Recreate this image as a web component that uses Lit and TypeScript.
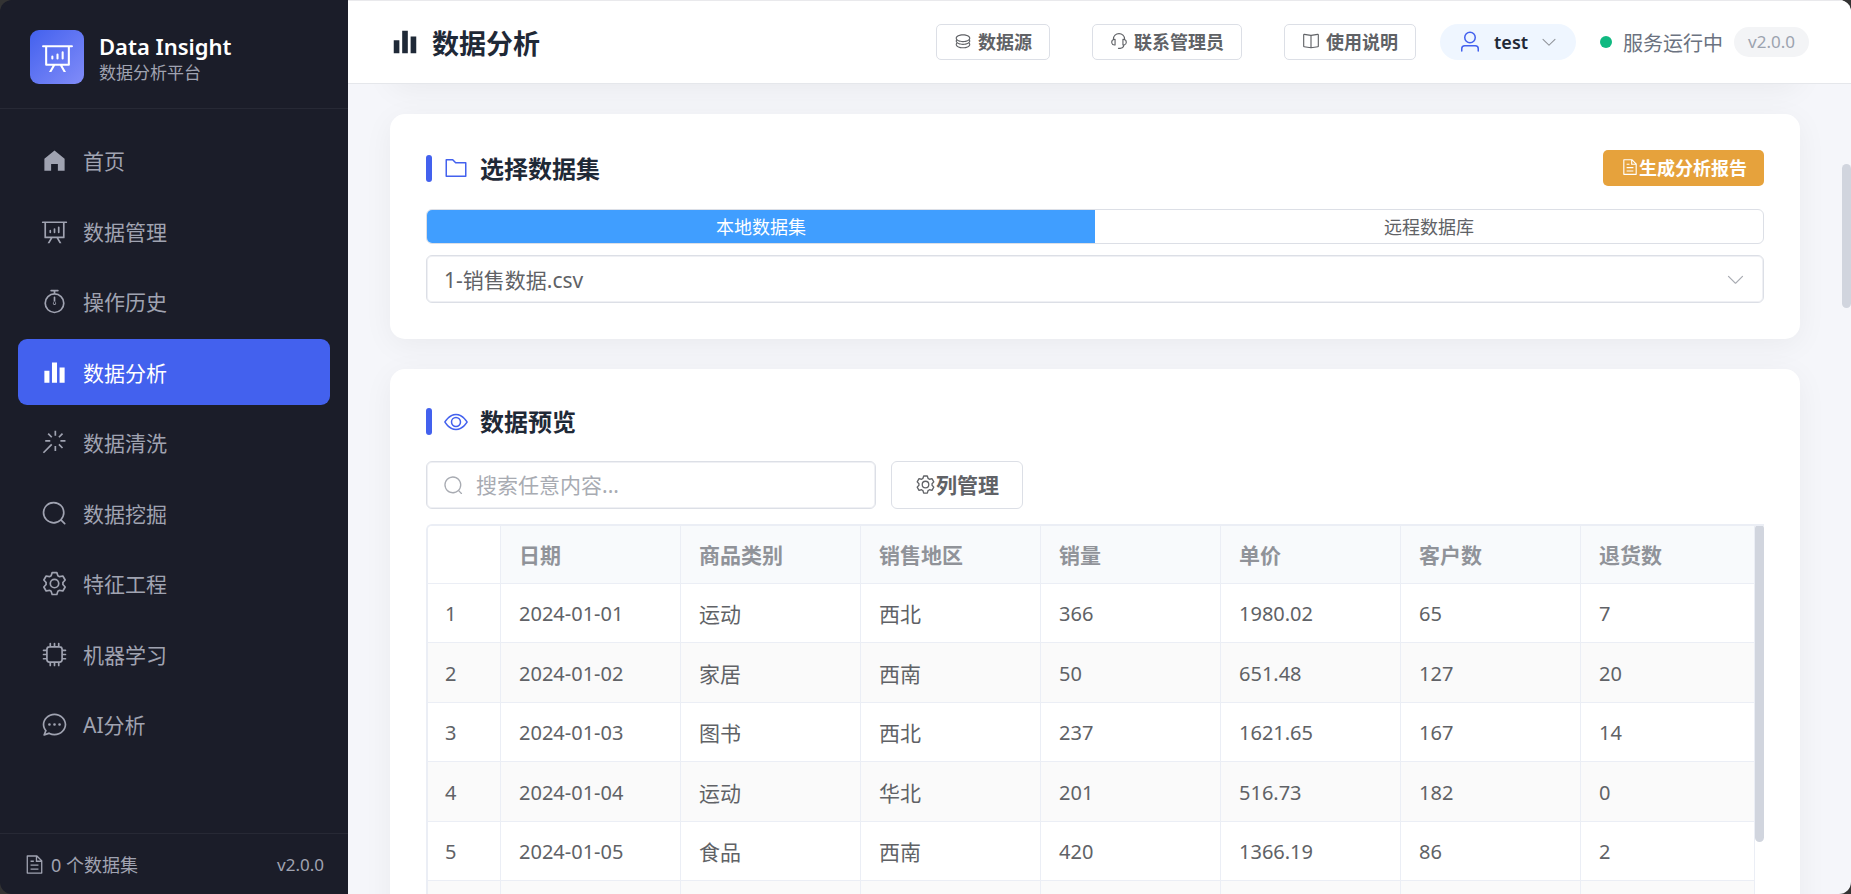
import { LitElement, html, css, svg } from "lit";
import { customElement, property } from "lit/decorators.js";
import { classMap } from "lit/directives/class-map.js";

const ICONS: Record<string, string> = {
  home: "M512 128 128 447.936V896h255.936V640H640v256h255.936V447.936z",
  board:
    "m665.216 768 110.848 192h-73.856L591.36 768H433.024L322.176 960H248.32l110.848-192H160a32 32 0 0 1-32-32V192H64a32 32 0 0 1 0-64h896a32 32 0 1 1 0 64h-64v544a32 32 0 0 1-32 32zM832 192H192v512h640zM352 448a32 32 0 0 1 32 32v64a32 32 0 0 1-64 0v-64a32 32 0 0 1 32-32m160-64a32 32 0 0 1 32 32v128a32 32 0 0 1-64 0V416a32 32 0 0 1 32-32m160-64a32 32 0 0 1 32 32v192a32 32 0 1 1-64 0V352a32 32 0 0 1 32-32",
  timer:
    "M512 896a320 320 0 1 0 0-640 320 320 0 0 0 0 640m0 64a384 384 0 1 1 0-768 384 384 0 0 1 0 768M512 320a32 32 0 0 1 32 32l-.512 224a32 32 0 1 1-64 0L480 352a32 32 0 0 1 32-32M448 576a64 64 0 1 0 128 0 64 64 0 1 0-128 0m96-448v128h-64V128h-96a32 32 0 0 1 0-64h256a32 32 0 1 1 0 64z",
  histogram: "M416 896V128h192v768zm-288 0V448h192v448zm576 0V320h192v576z",
  magic:
    "M512 64h64v192h-64zm0 576h64v192h-64zM160 480v-64h192v64zm576 0v-64h192v64zM249.856 199.04l45.248-45.184L430.848 289.6 385.6 334.848 249.856 199.104zM657.152 606.4l45.248-45.248 135.744 135.744-45.248 45.248zM114.048 923.2 68.8 877.952l316.8-316.8 45.248 45.248zM702.4 334.848 657.152 289.6l135.744-135.744 45.248 45.248z",
  search:
    "m795.904 750.72 124.992 124.928a32 32 0 0 1-45.248 45.248L750.656 795.904a416 416 0 1 1 45.248-45.248zM480 832a352 352 0 1 0 0-704 352 352 0 0 0 0 704",
  setting:
    "M600.704 64a32 32 0 0 1 30.464 22.208l35.2 109.376c14.784 7.232 28.928 15.36 42.432 24.512l112.384-24.192a32 32 0 0 1 34.432 15.36L944.32 364.8a32 32 0 0 1-4.032 37.504l-77.12 85.12a357.12 357.12 0 0 1 0 49.024l77.12 85.248a32 32 0 0 1 4.032 37.504l-88.704 153.6a32 32 0 0 1-34.432 15.296L708.8 803.904c-13.44 9.088-27.648 17.28-42.368 24.512l-35.264 109.376A32 32 0 0 1 600.704 960H423.296a32 32 0 0 1-30.464-22.208L357.696 828.48a351.616 351.616 0 0 1-42.56-24.64l-112.32 24.256a32 32 0 0 1-34.432-15.36L79.68 659.2a32 32 0 0 1 4.032-37.504l77.12-85.248a357.12 357.12 0 0 1 0-48.896l-77.12-85.248A32 32 0 0 1 79.68 364.8l88.704-153.6a32 32 0 0 1 34.432-15.296l112.32 24.256c13.568-9.152 27.776-17.408 42.56-24.64l35.2-109.312A32 32 0 0 1 423.232 64H600.64zm-23.424 64H446.72l-36.352 113.088-24.512 11.968a294.113 294.113 0 0 0-34.816 20.096l-22.656 15.36-116.224-25.088-65.28 113.152 79.68 88.192-1.92 27.136a293.12 293.12 0 0 0 0 40.192l1.92 27.136-79.808 88.192 65.344 113.152 116.224-25.024 22.656 15.296a294.113 294.113 0 0 0 34.816 20.096l24.512 11.968L446.72 896h130.688l36.48-113.152 24.448-11.904a288.282 288.282 0 0 0 34.752-20.096l22.592-15.296 116.288 25.024 65.28-113.152-79.744-88.192 1.92-27.136a293.12 293.12 0 0 0 0-40.256l-1.92-27.136 79.808-88.128-65.344-113.152-116.288 24.96-22.592-15.232a287.616 287.616 0 0 0-34.752-20.096l-24.448-11.904L577.344 128zM512 320a192 192 0 1 1 0 384 192 192 0 0 1 0-384m0 64a128 128 0 1 0 0 256 128 128 0 0 0 0-256",
  cpu: "M320 256a64 64 0 0 0-64 64v384a64 64 0 0 0 64 64h384a64 64 0 0 0 64-64V320a64 64 0 0 0-64-64zm0-64h384a128 128 0 0 1 128 128v384a128 128 0 0 1-128 128H320a128 128 0 0 1-128-128V320a128 128 0 0 1 128-128M512 64a32 32 0 0 1 32 32v128h-64V96a32 32 0 0 1 32-32m160 0a32 32 0 0 1 32 32v128h-64V96a32 32 0 0 1 32-32m-320 0a32 32 0 0 1 32 32v128h-64V96a32 32 0 0 1 32-32m160 896a32 32 0 0 1-32-32V800h64v128a32 32 0 0 1-32 32m160 0a32 32 0 0 1-32-32V800h64v128a32 32 0 0 1-32 32m-320 0a32 32 0 0 1-32-32V800h64v128a32 32 0 0 1-32 32M64 512a32 32 0 0 1 32-32h128v64H96a32 32 0 0 1-32-32m0-160a32 32 0 0 1 32-32h128v64H96a32 32 0 0 1-32-32m0 320a32 32 0 0 1 32-32h128v64H96a32 32 0 0 1-32-32m896-160a32 32 0 0 1-32 32H800v-64h128a32 32 0 0 1 32 32m0-160a32 32 0 0 1-32 32H800v-64h128a32 32 0 0 1 32 32m0 320a32 32 0 0 1-32 32H800v-64h128a32 32 0 0 1 32 32",
  chat: "m174.72 855.68 135.296-45.12 23.68 11.84C388.096 849.536 448.576 864 512 864c211.84 0 384-166.784 384-352S723.84 160 512 160 128 326.784 128 512c0 69.12 24.96 139.264 70.848 199.232l22.08 28.8-46.272 115.584zm-45.248 82.56A32 32 0 0 1 89.6 896l58.368-145.92C94.72 680.32 64 596.864 64 512 64 299.904 256 96 512 96s448 203.904 448 416-192 416-448 416a461.056 461.056 0 0 1-206.912-48.384l-175.616 58.56zM512 563.2a51.2 51.2 0 1 1 0-102.4 51.2 51.2 0 0 1 0 102.4m192 0a51.2 51.2 0 1 1 0-102.4 51.2 51.2 0 0 1 0 102.4m-384 0a51.2 51.2 0 1 1 0-102.4 51.2 51.2 0 0 1 0 102.4",
  document:
    "M832 384H576V128H192v768h640zm-26.496-64L640 154.496V320zM160 64h480l256 256v608a32 32 0 0 1-32 32H160a32 32 0 0 1-32-32V96a32 32 0 0 1 32-32m160 448h384v64H320zm0-192h160v64H320zm0 384h384v64H320z",
  coin: "m161.92 580.736 29.888 58.88C171.328 659.776 160 681.728 160 704c0 82.304 155.328 160 352 160s352-77.696 352-160c0-22.272-11.392-44.16-31.808-64.32l30.464-58.432C903.936 615.808 928 657.664 928 704c0 129.728-188.544 224-416 224S96 833.728 96 704c0-46.592 24.32-88.576 65.92-123.264zm0-192 29.888 58.88C171.328 467.84 160 489.792 160 512c0 82.304 155.328 160 352 160s352-77.696 352-160c0-22.272-11.392-44.16-31.808-64.32l30.464-58.432C903.936 423.808 928 465.664 928 512c0 129.728-188.544 224-416 224S96 641.728 96 512c0-46.592 24.32-88.576 65.92-123.264zM512 576c-227.456 0-416-94.272-416-224S284.544 128 512 128s416 94.272 416 224-188.544 224-416 224m0-64c196.672 0 352-77.696 352-160S708.672 192 512 192s-352 77.696-352 160 155.328 160 352 160",
  service:
    "M864 409.6a192 192 0 0 1-37.888 349.44A256.064 256.064 0 0 1 576 960h-96a32 32 0 1 1 0-64h96a192.064 192.064 0 0 0 181.12-128H736a32 32 0 0 1-32-32V416a32 32 0 0 1 32-32h32c10.368 0 20.544.832 30.528 2.432a288 288 0 0 0-573.056 0A193.235 193.235 0 0 1 256 384h32a32 32 0 0 1 32 32v320a32 32 0 0 1-32 32h-32a192 192 0 0 1-96-358.4 352 352 0 0 1 704 0M256 448a128 128 0 1 0 0 256zm640 128a128 128 0 0 0-128-128v256a128 128 0 0 0 128-128",
  reading:
    "m512 863.36 384-54.848v-638.72L525.568 222.72a96 96 0 0 1-27.136 0L128 169.792v638.72zM137.024 106.432l370.432 52.928a32 32 0 0 0 9.088 0l370.432-52.928A64 64 0 0 1 960 169.792v638.72a64 64 0 0 1-54.976 63.36l-388.48 55.488a32 32 0 0 1-9.088 0l-388.48-55.488A64 64 0 0 1 64 808.512v-638.72a64 64 0 0 1 73.024-63.36zM480 192h64v704h-64z",
  user: "M512 512a192 192 0 1 0 0-384 192 192 0 0 0 0 384m0 64a256 256 0 1 1 0-512 256 256 0 0 1 0 512m320 320v-96a96 96 0 0 0-96-96H288a96 96 0 0 0-96 96v96a32 32 0 1 1-64 0v-96a160 160 0 0 1 160-160h448a160 160 0 0 1 160 160v96a32 32 0 1 1-64 0",
  down: "M831.872 340.864 512 652.672 192.128 340.864a30.592 30.592 0 0 0-42.752 0 29.12 29.12 0 0 0 0 41.6L489.664 714.24a32 32 0 0 0 44.672 0l340.288-331.712a29.12 29.12 0 0 0 0-41.728 30.592 30.592 0 0 0-42.752 0z",
  folder:
    "M128 192v640h768V320H485.76L357.504 192zm-32-64h287.872l128.384 128H928a32 32 0 0 1 32 32v576a32 32 0 0 1-32 32H96a32 32 0 0 1-32-32V160a32 32 0 0 1 32-32",
  view: "M512 160c320 0 512 352 512 352S832 864 512 864 0 512 0 512s192-352 512-352m0 64c-225.28 0-384.128 208.064-436.8 288 52.608 79.872 211.456 288 436.8 288 225.28 0 384.128-208.064 436.8-288-52.608-79.872-211.456-288-436.8-288m0 64a224 224 0 1 1 0 448 224 224 0 0 1 0-448m0 64a160.192 160.192 0 0 0-160 160c0 88.192 71.744 160 160 160s160-71.808 160-160-71.744-160-160-160",
};

/* Single-colour icon, sized by the font size of its host. */
@customElement("ui-icon")
export class UiIcon extends LitElement {
  @property() name = "";

  static styles = css`
    :host {
      display: inline-flex;
      flex: none;
      width: 1em;
      height: 1em;
    }
    .glyph {
      width: 100%;
      height: 100%;
      fill: currentColor;
    }
  `;

  render() {
    return html`<svg class="glyph" viewBox="0 0 1024 1024" aria-hidden="true">
      ${svg`<path d=${ICONS[this.name] ?? ""}></path>`}
    </svg>`;
  }
}

const FONT = css`"Noto Sans", "Noto Sans CJK SC", sans-serif`;

const NAV = [
  ["home", "首页"],
  ["board", "数据管理"],
  ["timer", "操作历史"],
  ["histogram", "数据分析"],
  ["magic", "数据清洗"],
  ["search", "数据挖掘"],
  ["setting", "特征工程"],
  ["cpu", "机器学习"],
  ["chat", "AI分析"],
];

@customElement("app-sidebar")
export class AppSidebar extends LitElement {
  static styles = css`
    :host {
      display: flex;
      flex-direction: column;
      background: #1b1d29;
      color: #a0a3b1;
      font-family: ${FONT};
    }
    .brand {
      display: flex;
      align-items: center;
      gap: 15px;
      padding: 30px 30px 24px;
      border-bottom: 1px solid #272935;
    }
    .tile {
      display: flex;
      align-items: center;
      justify-content: center;
      width: 54px;
      height: 54px;
      border-radius: 9px;
      background: linear-gradient(135deg, #4361ee, #818cf8);
      color: #fff;
      font-size: 33px;
    }
    .name {
      color: #fff;
      font-size: 22px;
      font-weight: 600;
      line-height: 32px;
    }
    .sub {
      font-size: 17px;
      line-height: 22px;
    }
    .nav {
      flex: 1;
      display: flex;
      flex-direction: column;
      gap: 4px;
      padding: 18px;
    }
    .item {
      display: flex;
      align-items: center;
      gap: 15px;
      height: 66px;
      padding: 0 23px;
      border-radius: 9px;
      color: inherit;
      font-size: 21px;
      text-decoration: none;
    }
    .item:nth-child(odd) {
      margin-bottom: 1px;
    }
    .item.active {
      background: #4361ee;
      color: #fff;
    }
    .item ui-icon {
      font-size: 27px;
    }
    .foot {
      display: flex;
      align-items: center;
      justify-content: space-between;
      height: 60px;
      padding: 0 24px;
      border-top: 1px solid #272935;
      font-size: 18px;
    }
    .count {
      display: flex;
      align-items: center;
      gap: 6px;
    }
    .count ui-icon {
      font-size: 21px;
    }
    .version {
      font-size: 17px;
    }
  `;

  render() {
    return html`
      <div class="brand">
        <div class="tile"><ui-icon name="board"></ui-icon></div>
        <div>
          <div class="name">Data Insight</div>
          <div class="sub">数据分析平台</div>
        </div>
      </div>
      <nav class="nav">
        ${NAV.map(
          ([icon, label]) => html`<a
            href="#"
            class=${classMap({ item: true, active: label === "数据分析" })}
            ><ui-icon name=${icon}></ui-icon><span>${label}</span></a
          >`
        )}
      </nav>
      <div class="foot">
        <span class="count"><ui-icon name="document"></ui-icon>0 个数据集</span>
        <span class="version">v2.0.0</span>
      </div>
    `;
  }
}

@customElement("app-topbar")
export class AppTopbar extends LitElement {
  static styles = css`
    :host {
      display: flex;
      align-items: center;
      justify-content: space-between;
      box-sizing: border-box;
      height: 84px;
      padding: 0 42px;
      border-top: 1px solid #e9e9ec;
      border-bottom: 1px solid #e5e7eb;
      background: #fff;
      font-family: ${FONT};
      white-space: nowrap;
    }
    .title {
      display: flex;
      align-items: center;
      gap: 12px;
      margin: 0;
      color: #1f2937;
      font-size: 27px;
      font-weight: 700;
      line-height: 36px;
    }
    .title span {
      padding-top: 3px;
    }
    .title ui-icon {
      font-size: 30px;
    }
    .right,
    .links,
    .status {
      display: flex;
      align-items: center;
    }
    .right {
      gap: 24px;
    }
    .links {
      gap: 42px;
    }
    .status {
      gap: 11px;
      color: #6b7280;
      font-size: 20px;
    }
    .btn {
      display: flex;
      align-items: center;
      gap: 6px;
      height: 36px;
      padding: 0 17px 2px;
      border: 1px solid #dcdfe6;
      border-radius: 5px;
      background: #fff;
      color: #606266;
      font-family: inherit;
      font-size: 18px;
      font-weight: 700;
    }
    .user {
      display: flex;
      align-items: center;
      height: 36px;
      padding: 0 18px;
      gap: 12px;
      border: 0;
      border-radius: 18px;
      background: #eff6ff;
      color: #1f2937;
      font-family: inherit;
      font-size: 18px;
      font-weight: 600;
    }
    .avatar {
      color: #4361ee;
      font-size: 24px;
    }
    .caret {
      color: #909399;
      font-size: 18px;
    }
    .dot {
      width: 12px;
      height: 12px;
      border-radius: 50%;
      background: #10b981;
    }
    .version {
      padding: 0 14px;
      border-radius: 15px;
      background: #f3f4f6;
      color: #9ca3af;
      font-size: 17px;
      line-height: 30px;
    }
  `;

  render() {
    return html`
      <h1 class="title"><ui-icon name="histogram"></ui-icon><span>数据分析</span></h1>
      <div class="right">
        <div class="links">
          <button class="btn"><ui-icon name="coin"></ui-icon>数据源</button>
          <button class="btn"><ui-icon name="service"></ui-icon>联系管理员</button>
          <button class="btn"><ui-icon name="reading"></ui-icon>使用说明</button>
        </div>
        <button class="user">
          <ui-icon class="avatar" name="user"></ui-icon>test<ui-icon class="caret" name="down"></ui-icon>
        </button>
        <div class="status">
          <span class="dot"></span><span>服务运行中</span><span class="version">v2.0.0</span>
        </div>
      </div>
    `;
  }
}

const COLUMNS = ["日期", "商品类别", "销售地区", "销量", "单价", "客户数", "退货数"];
const ROWS = [
  ["2024-01-01", "运动", "西北", "366", "1980.02", "65", "7"],
  ["2024-01-02", "家居", "西南", "50", "651.48", "127", "20"],
  ["2024-01-03", "图书", "西北", "237", "1621.65", "167", "14"],
  ["2024-01-04", "运动", "华北", "201", "516.73", "182", "0"],
  ["2024-01-05", "食品", "西南", "420", "1366.19", "86", "2"],
  ["", "", "", "", "", "", ""],
];

@customElement("data-table")
export class DataTable extends LitElement {
  static styles = css`
    :host {
      display: block;
      position: relative;
      padding-right: 3px;
      border-top: 2px solid #ebeef5;
      border-left: 2px solid #ebeef5;
      border-radius: 6px 0 0 0;
      overflow: hidden;
      font-family: ${FONT};
    }
    .grid {
      width: 100%;
      border-collapse: separate;
      border-spacing: 0;
      table-layout: fixed;
      color: #606266;
      font-size: 20px;
    }
    .idx {
      width: 73px;
    }
    .head,
    .cell {
      box-sizing: border-box;
      height: 59px;
      padding: 2px 18px 0;
      border-right: 1px solid #ebeef5;
      border-bottom: 1px solid #ebeef5;
      line-height: 30px;
      text-align: left;
    }
    .cell:first-child {
      padding-left: 17px;
    }
    .head {
      height: 58px;
      padding-top: 0;
      background: #f8fafc;
      color: #909399;
      font-size: 21px;
      font-weight: 700;
    }
    .head.blank {
      background: #fff;
    }
    .text {
      font-size: 21px;
    }
    .row:nth-child(even) .cell {
      height: 60px;
      background: #fafafa;
    }
    .scroll {
      position: absolute;
      inset: -2px 0 0 auto;
      width: 9px;
      border-left: 1px solid #ebeef5;
      background: #fff;
    }
    .thumb {
      height: 318px;
      border-radius: 5px;
      background: #d1d5de;
    }
  `;

  render() {
    return html`
      <table class="grid">
        <thead>
          <tr>
            <th class="head blank idx"></th>
            ${COLUMNS.map((c) => html`<th class="head" scope="col">${c}</th>`)}
          </tr>
        </thead>
        <tbody>
          ${ROWS.map(
            (r, i) => html`<tr class="row">
              <td class="cell">${r[0] ? i + 1 : ""}</td>
              ${r.map(
                (v, c) => html`<td class=${classMap({ cell: true, text: c === 1 || c === 2 })}>${v}</td>`
              )}
            </tr>`
          )}
        </tbody>
      </table>
      <div class="scroll"><div class="thumb"></div></div>
    `;
  }
}

@customElement("app-root")
export class AppRoot extends LitElement {
  static styles = css`
    :host {
      display: block;
      height: 100vh;
      background: #333;
      font-family: ${FONT};
    }
    .window {
      display: grid;
      grid-template-columns: 348px minmax(0, 1fr);
      height: 100%;
      border-radius: 12px;
      overflow: hidden;
    }
    .main {
      position: relative;
      display: flex;
      flex-direction: column;
      min-height: 0;
      background: #f5f6fa;
    }
    .top {
      position: relative;
      z-index: 1;
    }
    .body {
      flex: 1;
      display: flex;
      flex-direction: column;
      gap: 30px;
      min-height: 0;
      padding: 0 51px 0 42px;
      overflow: hidden;
    }
    .card {
      flex: none;
      padding: 36px;
      border-radius: 15px;
      background: #fff;
      box-shadow: 0 6px 30px rgba(0, 0, 0, 0.05);
    }
    .passed {
      margin-top: -72px;
    }
    .bar {
      display: flex;
      align-items: center;
      justify-content: space-between;
      min-height: 33px;
      margin-bottom: 23px;
    }
    .heading {
      display: flex;
      align-items: center;
      gap: 12px;
      margin: 0;
      color: #1f2937;
      font-size: 24px;
      font-weight: 700;
      line-height: 33px;
    }
    .heading::before {
      content: "";
      width: 6px;
      height: 27px;
      border-radius: 3px;
      background: #4361ee;
    }
    .heading ui-icon {
      color: #4361ee;
    }
    .report {
      display: flex;
      align-items: center;
      height: 36px;
      padding: 0 17px 2px 18px;
      border: 0;
      border-radius: 5px;
      background: #e6a23c;
      color: #fff;
      font-family: inherit;
      font-size: 18px;
      font-weight: 700;
    }
    .segments {
      display: grid;
      grid-template-columns: 1fr 1fr;
      margin: 0 0 11px;
      padding: 0;
      border: 1px solid #dcdfe6;
      border-radius: 6px;
      overflow: hidden;
    }
    .segment {
      padding-top: 2px;
      color: #606266;
      font-size: 18px;
      line-height: 31px;
      text-align: center;
    }
    .segment:has(.radio:checked) {
      background: #409eff;
      color: #fff;
    }
    .radio {
      position: absolute;
      opacity: 0;
      pointer-events: none;
    }
    .picker {
      display: grid;
      align-items: center;
    }
    .picker > * {
      grid-area: 1 / 1;
    }
    .select,
    .input {
      box-sizing: border-box;
      width: 100%;
      height: 48px;
      border: 1px solid #dcdfe6;
      border-radius: 6px;
      box-shadow: inset 0 0 0 1px #eff0f4;
      background: #fff;
      color: #606266;
      font-family: inherit;
      font-size: 21px;
      outline: 0;
    }
    .select {
      appearance: none;
      padding: 2px 17px 0;
    }
    .caret {
      justify-self: end;
      margin-right: 18px;
      color: #a8abb2;
      font-size: 21px;
      pointer-events: none;
    }
    .tools {
      display: flex;
      gap: 15px;
      margin-bottom: 15px;
    }
    .finder {
      display: grid;
      align-items: center;
      width: 450px;
    }
    .finder > * {
      grid-area: 1 / 1;
    }
    .finder ui-icon {
      margin-left: 17px;
      color: #a8abb2;
      font-size: 21px;
    }
    .input {
      padding: 0 18px 0 49px;
    }
    .input::placeholder {
      color: #a8abb2;
    }
    .columns {
      display: flex;
      align-items: center;
      height: 48px;
      padding: 0 23px 2px;
      border: 1px solid #dcdfe6;
      border-radius: 6px;
      background: #fff;
      color: #606266;
      font-family: inherit;
      font-size: 21px;
      font-weight: 700;
    }
    .page-thumb {
      position: absolute;
      top: 164px;
      right: 0;
      width: 9px;
      height: 144px;
      border-radius: 5px;
      background: #d1d5de;
    }
  `;

  render() {
    return html`
      <div class="window">
        <app-sidebar></app-sidebar>
        <main class="main">
          <app-topbar class="top"></app-topbar>
          <div class="body">
            <div class="card passed"></div>
            <section class="card">
              <div class="bar">
                <h2 class="heading"><ui-icon name="folder"></ui-icon>选择数据集</h2>
                <button class="report"><ui-icon name="document"></ui-icon>生成分析报告</button>
              </div>
              <div class="segments" role="radiogroup" aria-label="数据来源">
                <label class="segment"
                  ><input class="radio" type="radio" name="source" checked />本地数据集</label
                >
                <label class="segment"><input class="radio" type="radio" name="source" />远程数据库</label>
              </div>
              <div class="picker">
                <select class="select" aria-label="选择数据集">
                  <option>1-销售数据.csv</option>
                </select>
                <ui-icon class="caret" name="down"></ui-icon>
              </div>
            </section>
            <section class="card">
              <div class="bar">
                <h2 class="heading"><ui-icon name="view"></ui-icon>数据预览</h2>
              </div>
              <div class="tools">
                <div class="finder">
                  <input class="input" type="text" placeholder="搜索任意内容..." aria-label="搜索任意内容" />
                  <ui-icon name="search"></ui-icon>
                </div>
                <button class="columns"><ui-icon name="setting"></ui-icon>列管理</button>
              </div>
              <data-table></data-table>
            </section>
          </div>
          <div class="page-thumb"></div>
        </main>
      </div>
    `;
  }
}
